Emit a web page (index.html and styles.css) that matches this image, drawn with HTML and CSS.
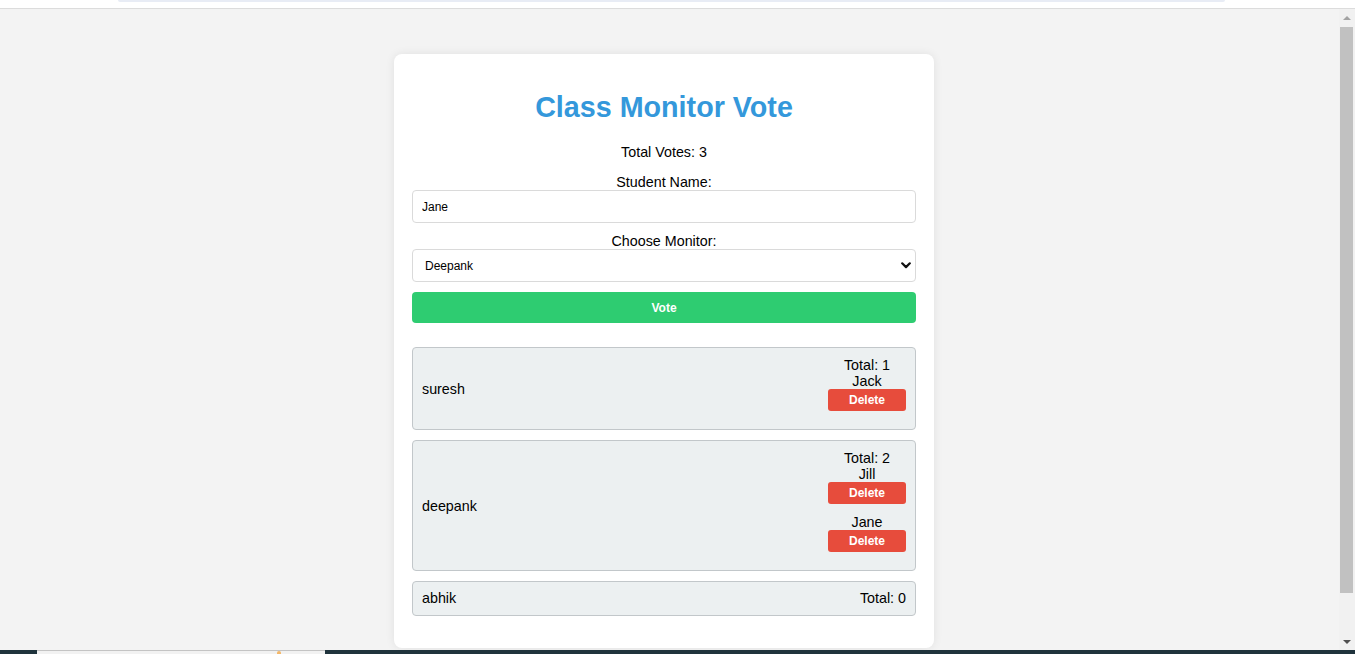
FILE: index.html
```html
<!DOCTYPE html>
<html lang="en">
<head>
<meta charset="utf-8">
<title>Class Monitor Vote</title>
<link rel="stylesheet" href="styles.css">
</head>
<body>
<div class="topbar"><div class="tabstrip"></div></div>
<div class="viewport">
  <main class="page">
    <div class="card">
      <h1 class="title">Class Monitor Vote</h1>
      <p class="total">Total Votes: 3</p>
      <label class="field-label" for="student">Student Name:</label>
      <input class="text-input" id="student" type="text" value="Jane">
      <label class="field-label field-label-gap" for="monitor">Choose Monitor:</label>
      <div class="select-wrap">
        <select class="select" id="monitor"><option>Deepank</option></select>
        <svg class="chevron" width="10" height="7" viewBox="0 0 10 7" aria-hidden="true"><path d="M1.2 1.3 L5 5.1 L8.8 1.3" fill="none" stroke="#111" stroke-width="2.2" stroke-linecap="round" stroke-linejoin="round"/></svg>
      </div>
      <button class="vote-btn">Vote</button>
      <ul class="candidates">
        <li class="candidate">
          <span class="cand-name">suresh</span>
          <div class="votes">
            <div class="vote-total">Total: 1</div>
            <div class="voter"><div class="voter-name">Jack</div><button class="delete-btn">Delete</button></div>
          </div>
        </li>
        <li class="candidate">
          <span class="cand-name">deepank</span>
          <div class="votes">
            <div class="vote-total">Total: 2</div>
            <div class="voter"><div class="voter-name">Jill</div><button class="delete-btn">Delete</button></div>
            <div class="voter"><div class="voter-name">Jane</div><button class="delete-btn">Delete</button></div>
          </div>
        </li>
        <li class="candidate candidate-empty">
          <span class="cand-name">abhik</span>
          <div class="votes">
            <div class="vote-total">Total: 0</div>
          </div>
        </li>
      </ul>
    </div>
  </main>
  <div class="scrollbar">
    <div class="sb-btn"><span class="arrow-up"></span></div>
    <div class="sb-thumb"></div>
    <div class="sb-track"></div>
    <div class="sb-btn"><span class="arrow-down"></span></div>
  </div>
</div>
<div class="taskbar"><div class="task-item"><span class="task-dot"></span></div></div>
</body>
</html>
```

FILE: styles.css
```css
* { box-sizing: border-box; }

html, body {
  margin: 0;
  padding: 0;
}

body {
  height: 654px;
  overflow: hidden;
  display: flex;
  flex-direction: column;
  font-family: "Liberation Sans", Arial, sans-serif;
  color: #000;
  background: #f3f3f3;
}

.topbar {
  height: 9px;
  flex: none;
  background: #fff;
  border-bottom: 1px solid #dcdcdc;
}

.tabstrip {
  margin-left: 118px;
  width: 1107px;
  height: 2px;
  background: #e8ecf5;
  border-radius: 0 0 6px 6px;
}

.viewport {
  flex: 1;
  display: flex;
  min-height: 0;
  overflow: hidden;
}

.page {
  flex: 1;
  display: flex;
  justify-content: center;
  align-items: flex-start;
  padding: 45px 11px 0 0;
  background: #f3f3f3;
}

.card {
  width: 540px;
  flex: none;
  background: #fff;
  border-radius: 8px;
  padding: 18px 18px 32px;
  box-shadow: 0 0 10px rgba(0, 0, 0, 0.08);
  display: flex;
  flex-direction: column;
}

.title {
  margin: 19px 0 0;
  font-size: 28.7px;
  line-height: 32px;
  font-weight: bold;
  color: #3498db;
  text-align: center;
}

.total {
  margin: 21px 0 0;
  font-size: 14.3px;
  line-height: 16px;
  text-align: center;
}

.field-label {
  display: block;
  margin-top: 14px;
  font-size: 14.3px;
  line-height: 16px;
  text-align: center;
}

.field-label-gap { margin-top: 10px; }

.text-input,
.select {
  display: block;
  width: 100%;
  height: 33px;
  margin: 0;
  border: 1px solid #dadada;
  border-radius: 4px;
  background: #fff;
  font-family: "Liberation Sans", Arial, sans-serif;
  font-size: 12px;
  color: #000;
  outline: none;
}

.text-input { padding: 0 9px; }

.select-wrap { position: relative; }

.select {
  -webkit-appearance: none;
  appearance: none;
  padding: 0 12px;
}

.chevron {
  position: absolute;
  right: 5px;
  top: 13px;
  pointer-events: none;
}

.vote-btn {
  margin-top: 10px;
  height: 31px;
  width: 100%;
  border: none;
  border-radius: 4px;
  background: #2ecc71;
  color: #fff;
  font-family: "Liberation Sans", Arial, sans-serif;
  font-size: 12px;
  font-weight: bold;
}

.candidates {
  list-style: none;
  margin: 24px 0 0;
  padding: 0;
  display: flex;
  flex-direction: column;
  gap: 10px;
}

.candidate {
  display: flex;
  justify-content: space-between;
  align-items: center;
  background: #ecf0f1;
  border: 1px solid #c2c7ca;
  border-radius: 4px;
  padding: 9px 9px 8px;
  font-size: 14.3px;
  line-height: 16px;
}

.candidate-empty { padding: 8px 9px 9px; }

.votes {
  display: flex;
  flex-direction: column;
  align-items: center;
  text-align: center;
}

.voter {
  display: flex;
  flex-direction: column;
  align-items: center;
  margin-bottom: 10px;
}

.delete-btn {
  width: 78px;
  height: 22px;
  border: none;
  border-radius: 3px;
  background: #e74c3c;
  color: #fff;
  font-family: "Liberation Sans", Arial, sans-serif;
  font-size: 12px;
  font-weight: bold;
  padding: 0;
}

.scrollbar {
  width: 16px;
  flex: none;
  display: flex;
  flex-direction: column;
  background: #f1f1f1;
}

.sb-btn {
  height: 17px;
  flex: none;
  display: flex;
  align-items: center;
  justify-content: center;
}

.arrow-up {
  width: 0;
  height: 0;
  border-left: 4px solid transparent;
  border-right: 4px solid transparent;
  border-bottom: 4px solid #a3a3a3;
}

.arrow-down {
  width: 0;
  height: 0;
  border-left: 4px solid transparent;
  border-right: 4px solid transparent;
  border-top: 4px solid #505050;
}

.sb-thumb {
  height: 566px;
  flex: none;
  margin: 1px 2px 0 1px;
  background: #c1c1c1;
}

.sb-track { flex: 1; }

.taskbar {
  height: 4px;
  flex: none;
  background: #1f333c;
  display: flex;
}

.task-item {
  margin-left: 37px;
  width: 288px;
  background: #f2f2f2;
  border-top: 1px solid #c4c4c4;
  position: relative;
}

.task-dot {
  position: absolute;
  left: 240px;
  top: 0;
  width: 4px;
  height: 3px;
  border-radius: 2px 2px 0 0;
  background: #f4b768;
}
```
